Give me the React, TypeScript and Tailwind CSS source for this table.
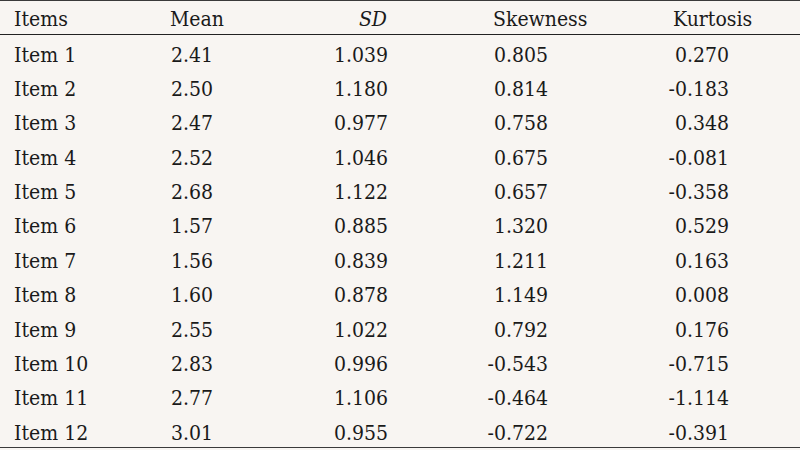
import React from "react";

const rows: [string, string, string, string, string][] = [
  ["Item 1", "2.41", "1.039", "0.805", "0.270"],
  ["Item 2", "2.50", "1.180", "0.814", "-0.183"],
  ["Item 3", "2.47", "0.977", "0.758", "0.348"],
  ["Item 4", "2.52", "1.046", "0.675", "-0.081"],
  ["Item 5", "2.68", "1.122", "0.657", "-0.358"],
  ["Item 6", "1.57", "0.885", "1.320", "0.529"],
  ["Item 7", "1.56", "0.839", "1.211", "0.163"],
  ["Item 8", "1.60", "0.878", "1.149", "0.008"],
  ["Item 9", "2.55", "1.022", "0.792", "0.176"],
  ["Item 10", "2.83", "0.996", "-0.543", "-0.715"],
  ["Item 11", "2.77", "1.106", "-0.464", "-1.114"],
  ["Item 12", "3.01", "0.955", "-0.722", "-0.391"],
];

export default function App() {
  return (
    <div
      className="w-[800px] h-[450px] bg-[#f8f5f2] text-[#1a1a1a] text-[21px] overflow-hidden"
      style={{ fontFamily: '"DejaVu Serif Condensed", "DejaVu Serif", serif' }}
    >
      <div className="border-t-[1.5px] border-[#3a3a3a]" />
      <div className="flex h-[33.5px] pt-[6px] leading-[24px] border-b-[1.5px] border-[#222]">
        <div className="w-[170px] pl-[14px]">Items</div>
        <div className="w-[150px]">Mean</div>
        <div className="w-[67px] text-right italic">SD</div>
        <div className="w-[286px] pl-[106px]">Skewness</div>
        <div className="flex-1">Kurtosis</div>
      </div>
      {rows.map((r) => (
        <div key={r[0]} className="flex h-[34.4px] pt-[8px] leading-[24px]">
          <div className="w-[150px] pl-[14px]">{r[0]}</div>
          <div className="w-[63px] text-right">{r[1]}</div>
          <div className="w-[175px] text-right">{r[2]}</div>
          <div className="w-[160px] text-right">{r[3]}</div>
          <div className="w-[181px] text-right">{r[4]}</div>
        </div>
      ))}
      <div className="border-t-[1.5px] border-[#3a3a3a]" />
    </div>
  );
}
